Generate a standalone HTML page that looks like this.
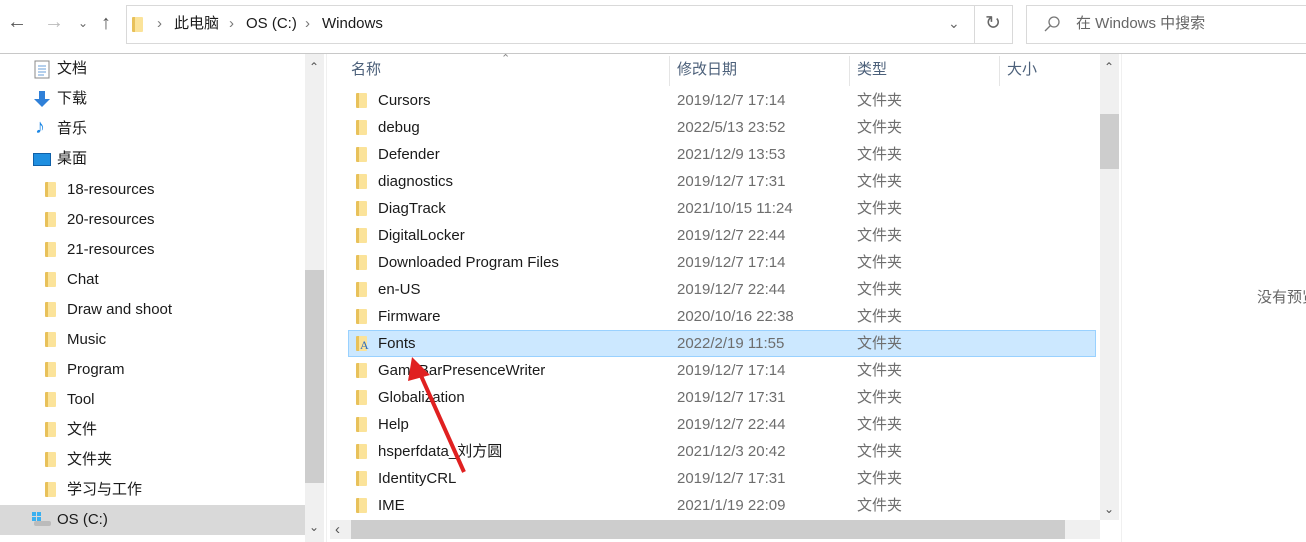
<!DOCTYPE html><html><head><meta charset="utf-8"><style>
*{margin:0;padding:0;box-sizing:border-box}
body{width:1306px;height:542px;background:#fff;font-family:"Liberation Sans","Noto Sans CJK SC",sans-serif;font-size:15px;line-height:18px;color:#1a1a1a;position:relative;overflow:hidden}
.a{position:absolute;white-space:nowrap}
.fold{position:absolute;width:11px;height:15px;background:linear-gradient(90deg,#e8c15a 0 3px,#fbe39a 3px);border-radius:1px}
.row{position:absolute;left:348px;height:27px;width:748px}
.row .n{position:absolute;left:30px;top:5px}
.row .d{position:absolute;left:329px;top:5px;color:#6d6d6d}
.row .t{position:absolute;left:509px;top:5px;color:#6d6d6d}
.nav{position:absolute;left:0;height:30px;width:305px}
.nav span{position:absolute;left:67px;top:6px}
</style></head><body>
<!-- toolbar -->
<div class="a" style="left:7px;top:13px;font-size:20px;color:#555">←</div>
<div class="a" style="left:44px;top:13px;font-size:20px;color:#bbb">→</div>
<div class="a" style="left:78px;top:14px;font-size:12px;color:#666">⌄</div>
<div class="a" style="left:101px;top:14px;font-size:20px;color:#555">↑</div>
<div class="a" style="left:126px;top:5px;width:887px;height:39px;border:1px solid #d9d9d9"></div>
<div class="fold" style="left:132px;top:17px"></div>
<div class="a" style="left:157px;top:15px;color:#777">›</div>
<div class="a" style="left:174px;top:15px">此电脑</div>
<div class="a" style="left:229px;top:15px;color:#777">›</div>
<div class="a" style="left:246px;top:15px">OS (C:)</div>
<div class="a" style="left:305px;top:15px;color:#777">›</div>
<div class="a" style="left:322px;top:15px">Windows</div>
<div class="a" style="left:948px;top:14px;color:#666;font-size:14px">⌄</div>
<div class="a" style="left:974px;top:5px;width:1px;height:39px;background:#d9d9d9"></div>
<div class="a" style="left:985px;top:15px;font-size:19px;color:#666">↻</div>
<div class="a" style="left:1026px;top:5px;width:290px;height:39px;border:1px solid #d9d9d9"></div>
<svg class="a" style="left:1043px;top:15px" width="18" height="18"><circle cx="11" cy="7" r="5" fill="none" stroke="#777" stroke-width="1.3"/><line x1="7.5" y1="10.5" x2="2" y2="16" stroke="#777" stroke-width="1.3"/></svg>
<div class="a" style="left:1076px;top:15px;color:#666">在 Windows 中搜索</div>
<div class="a" style="left:0;top:53px;width:1306px;height:1px;background:#c8c8c8"></div>
<!-- nav pane -->
<svg class="a" style="left:34px;top:60px" width="16" height="19"><rect x="1" y="1" width="14" height="17" fill="#fff" stroke="#888"/><g stroke="#6a9fd8"><line x1="4" y1="6" x2="12" y2="6"/><line x1="4" y1="9" x2="12" y2="9"/><line x1="4" y1="12" x2="12" y2="12"/><line x1="4" y1="15" x2="10" y2="15"/></g></svg>
<div class="a" style="left:57px;top:60px">文档</div>
<svg class="a" style="left:33px;top:90px" width="18" height="18"><path d="M6 1h6v8h5l-8 8-8-8h5z" fill="#2f80d8"/></svg>
<div class="a" style="left:57px;top:90px">下载</div>
<div class="a" style="left:35px;top:118px;font-size:20px;color:#1e88e5">♪</div>
<div class="a" style="left:57px;top:120px">音乐</div>
<div class="a" style="left:33px;top:153px;width:18px;height:13px;background:#1f8fe0;border:1px solid #0f60a8"></div>
<div class="a" style="left:57px;top:150px">桌面</div>
<div class="nav" style="top:175px"><div class="fold" style="left:45px;top:7px"></div><span>18-resources</span></div>
<div class="nav" style="top:205px"><div class="fold" style="left:45px;top:7px"></div><span>20-resources</span></div>
<div class="nav" style="top:235px"><div class="fold" style="left:45px;top:7px"></div><span>21-resources</span></div>
<div class="nav" style="top:265px"><div class="fold" style="left:45px;top:7px"></div><span>Chat</span></div>
<div class="nav" style="top:295px"><div class="fold" style="left:45px;top:7px"></div><span>Draw and shoot</span></div>
<div class="nav" style="top:325px"><div class="fold" style="left:45px;top:7px"></div><span>Music</span></div>
<div class="nav" style="top:355px"><div class="fold" style="left:45px;top:7px"></div><span>Program</span></div>
<div class="nav" style="top:385px"><div class="fold" style="left:45px;top:7px"></div><span>Tool</span></div>
<div class="nav" style="top:415px"><div class="fold" style="left:45px;top:7px"></div><span>文件</span></div>
<div class="nav" style="top:445px"><div class="fold" style="left:45px;top:7px"></div><span>文件夹</span></div>
<div class="nav" style="top:475px"><div class="fold" style="left:45px;top:7px"></div><span>学习与工作</span></div>
<div class="nav" style="top:505px;background:#d9d9d9"><div class="a" style="left:32px;top:7px;width:10px;height:10px;background:linear-gradient(#3ab0f0,#3ab0f0) 0 0/4px 4px no-repeat,linear-gradient(#3ab0f0,#3ab0f0) 5px 0/4px 4px no-repeat,linear-gradient(#3ab0f0,#3ab0f0) 0 5px/4px 4px no-repeat,linear-gradient(#3ab0f0,#3ab0f0) 5px 5px/4px 4px no-repeat"></div><div class="a" style="left:34px;top:16px;width:17px;height:5px;background:#bbb;border-radius:2px"></div><span style="left:57px">OS (C:)</span></div>
<!-- left scrollbar -->
<div class="a" style="left:305px;top:54px;width:19px;height:488px;background:#f0f0f0"></div>
<div class="a" style="left:305px;top:270px;width:19px;height:213px;background:#cdcdcd"></div>
<div class="a" style="left:309px;top:58px;font-size:12px;color:#555">⌃</div>
<div class="a" style="left:309px;top:518px;font-size:12px;color:#555">⌄</div>
<div class="a" style="left:326px;top:54px;width:1px;height:488px;background:#f0f0f0"></div>
<!-- headers -->
<div class="a" style="left:501px;top:50px;font-size:11px;color:#888">⌃</div>
<div class="a" style="left:351px;top:61px;color:#4c607a">名称</div>
<div class="a" style="left:669px;top:56px;width:1px;height:30px;background:#e5e5e5"></div>
<div class="a" style="left:677px;top:61px;color:#4c607a">修改日期</div>
<div class="a" style="left:849px;top:56px;width:1px;height:30px;background:#e5e5e5"></div>
<div class="a" style="left:857px;top:61px;color:#4c607a">类型</div>
<div class="a" style="left:999px;top:56px;width:1px;height:30px;background:#e5e5e5"></div>
<div class="a" style="left:1007px;top:61px;color:#4c607a">大小</div>
<!-- rows -->
<div class="row" style="top:87px"><div class="fold" style="left:8px;top:6px"></div><span class="n">Cursors</span><span class="d">2019/12/7 17:14</span><span class="t">文件夹</span></div>
<div class="row" style="top:114px"><div class="fold" style="left:8px;top:6px"></div><span class="n">debug</span><span class="d">2022/5/13 23:52</span><span class="t">文件夹</span></div>
<div class="row" style="top:141px"><div class="fold" style="left:8px;top:6px"></div><span class="n">Defender</span><span class="d">2021/12/9 13:53</span><span class="t">文件夹</span></div>
<div class="row" style="top:168px"><div class="fold" style="left:8px;top:6px"></div><span class="n">diagnostics</span><span class="d">2019/12/7 17:31</span><span class="t">文件夹</span></div>
<div class="row" style="top:195px"><div class="fold" style="left:8px;top:6px"></div><span class="n">DiagTrack</span><span class="d">2021/10/15 11:24</span><span class="t">文件夹</span></div>
<div class="row" style="top:222px"><div class="fold" style="left:8px;top:6px"></div><span class="n">DigitalLocker</span><span class="d">2019/12/7 22:44</span><span class="t">文件夹</span></div>
<div class="row" style="top:249px"><div class="fold" style="left:8px;top:6px"></div><span class="n">Downloaded Program Files</span><span class="d">2019/12/7 17:14</span><span class="t">文件夹</span></div>
<div class="row" style="top:276px"><div class="fold" style="left:8px;top:6px"></div><span class="n">en-US</span><span class="d">2019/12/7 22:44</span><span class="t">文件夹</span></div>
<div class="row" style="top:303px"><div class="fold" style="left:8px;top:6px"></div><span class="n">Firmware</span><span class="d">2020/10/16 22:38</span><span class="t">文件夹</span></div>
<div class="row" style="top:330px;background:#cce8ff;border:1px solid #99d1ff"><div class="fold" style="left:7px;top:5px"></div><span class="a" style="left:11px;top:5px;font-size:12px;color:#2a6bc0;font-family:'Liberation Serif',serif">A</span><span class="n" style="left:29px;top:4px">Fonts</span><span class="d" style="left:328px;top:4px">2022/2/19 11:55</span><span class="t" style="left:508px;top:4px">文件夹</span></div>
<div class="row" style="top:357px"><div class="fold" style="left:8px;top:6px"></div><span class="n">GameBarPresenceWriter</span><span class="d">2019/12/7 17:14</span><span class="t">文件夹</span></div>
<div class="row" style="top:384px"><div class="fold" style="left:8px;top:6px"></div><span class="n">Globalization</span><span class="d">2019/12/7 17:31</span><span class="t">文件夹</span></div>
<div class="row" style="top:411px"><div class="fold" style="left:8px;top:6px"></div><span class="n">Help</span><span class="d">2019/12/7 22:44</span><span class="t">文件夹</span></div>
<div class="row" style="top:438px"><div class="fold" style="left:8px;top:6px"></div><span class="n">hsperfdata_刘方圆</span><span class="d">2021/12/3 20:42</span><span class="t">文件夹</span></div>
<div class="row" style="top:465px"><div class="fold" style="left:8px;top:6px"></div><span class="n">IdentityCRL</span><span class="d">2019/12/7 17:31</span><span class="t">文件夹</span></div>
<div class="row" style="top:492px"><div class="fold" style="left:8px;top:6px"></div><span class="n">IME</span><span class="d">2021/1/19 22:09</span><span class="t">文件夹</span></div>
<!-- arrow -->
<svg class="a" style="left:400px;top:355px" width="80" height="125"><line x1="64" y1="117" x2="18" y2="14" stroke="#e02020" stroke-width="4"/><path d="M12 2 L30 20 L8 26 Z" fill="#e02020"/></svg>
<!-- right vscroll -->
<div class="a" style="left:1100px;top:54px;width:19px;height:466px;background:#f0f0f0"></div>
<div class="a" style="left:1100px;top:114px;width:19px;height:55px;background:#cdcdcd"></div>
<div class="a" style="left:1104px;top:58px;font-size:12px;color:#555">⌃</div>
<div class="a" style="left:1104px;top:500px;font-size:12px;color:#555">⌄</div>
<div class="a" style="left:1121px;top:54px;width:1px;height:488px;background:#f0f0f0"></div>
<!-- hscroll -->
<div class="a" style="left:330px;top:520px;width:770px;height:19px;background:#f0f0f0"></div>
<div class="a" style="left:351px;top:520px;width:714px;height:19px;background:#cdcdcd"></div>
<div class="a" style="left:335px;top:521px;font-size:15px;color:#555">‹</div>
<div class="a" style="left:1257px;top:289px;color:#666">没有预览</div>
</body></html>
